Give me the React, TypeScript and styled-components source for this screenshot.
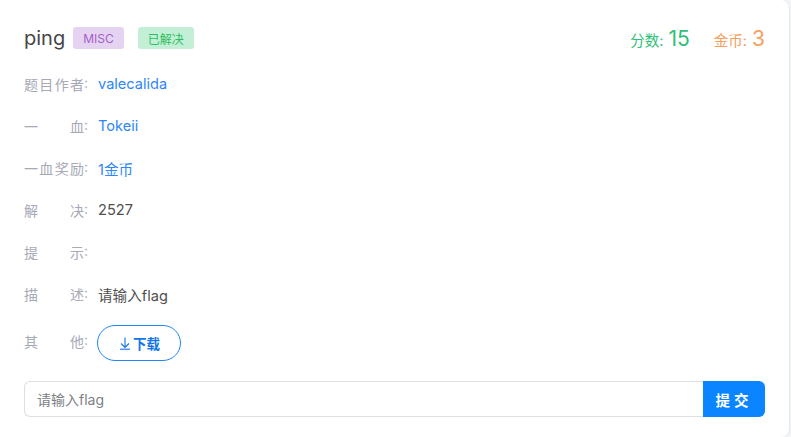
import styled, { createGlobalStyle } from "styled-components";

const GlobalStyle = createGlobalStyle`
  html, body {
    margin: 0;
    padding: 0;
    background: #f4f5f7;
    font-family: "Inter", "Noto Sans CJK SC", sans-serif;
  }
`;

const Card = styled.div`
  width: 789px;
  box-sizing: border-box;
  background: #fff;
  border-radius: 0 8px 8px 0;
  box-shadow: 1px 0 2px rgba(0, 0, 0, 0.06);
  padding: 20px 24px 20px 24px;
`;

const Header = styled.div`
  display: flex;
  align-items: center;
  height: 36px;
  margin-bottom: 7px;
`;

const Title = styled.h2`
  margin: 0;
  font-size: 20px;
  font-weight: 400;
  color: #454545;
`;

const Tag = styled.span<{ $bg: string; $fg: string; $ml: number }>`
  display: inline-flex;
  align-items: center;
  height: 22px;
  padding: 0 10px;
  margin-left: ${(p) => p.$ml}px;
  border-radius: 3px;
  font-size: 12px;
  background: ${(p) => p.$bg};
  color: ${(p) => p.$fg};
`;

const Scores = styled.div`
  margin-left: auto;
  display: flex;
  align-items: baseline;
  gap: 24px;
`;

const Score = styled.span<{ $color: string }>`
  color: ${(p) => p.$color};
  font-size: 14.5px;

  b {
    font-weight: 400;
    font-size: 21px;
    margin-left: 5px;
  }
`;

const Row = styled.div<{ $h?: number }>`
  display: flex;
  align-items: center;
  height: ${(p) => p.$h ?? 42}px;
  font-size: 14px;
`;

const Label = styled.span`
  width: 64px;
  margin-right: 10px;
  display: flex;
  color: #a6a9b6;

  span {
    flex: 1;
    text-align: justify;
    text-align-last: justify;
  }
`;

const Value = styled.span<{ $link?: boolean }>`
  color: ${(p) => (p.$link ? "#2f86f6" : "#505050")};
  font-size: 14.6px;
`;

const DownloadButton = styled.button`
  height: 36px;
  width: 84px;
  margin-top: 4px;
  margin-left: -1px;
  border: 1px solid #1f86f5;
  border-radius: 18px;
  background: #fff;
  color: #1475e8;
  font-family: inherit;
  font-size: 13.5px;
  font-weight: 700;
  display: inline-flex;
  align-items: center;
  justify-content: center;
  gap: 1px;
  cursor: pointer;
`;

const SubmitBar = styled.div`
  display: flex;
  margin-top: 14px;
  height: 36px;
`;

const FlagInput = styled.input`
  flex: 1;
  box-sizing: border-box;
  border: 1px solid #dcdfe6;
  border-right: none;
  border-radius: 6px 0 0 6px;
  padding: 0 12px;
  font-family: inherit;
  font-size: 14px;
  color: #555;
  outline: none;

  &::placeholder {
    color: #7c7f86;
  }
`;

const SubmitButton = styled.button`
  width: 62px;
  border: none;
  border-radius: 0 6px 6px 0;
  background: #0a84ff;
  color: #fff;
  font-family: inherit;
  font-size: 14.5px;
  font-weight: 700;
  letter-spacing: 4px;
  padding-left: 6px;
  cursor: pointer;
`;

const rows: { label: string; value?: string; link?: boolean }[] = [
  { label: "题目作者", value: "valecalida", link: true },
  { label: "一血", value: "Tokeii", link: true },
  { label: "一血奖励", value: "1金币", link: true },
  { label: "解决", value: "2527" },
  { label: "提示" },
  { label: "描述", value: "请输入flag" },
];

const App = () => (
  <>
    <GlobalStyle />
    <Card>
      <Header>
        <Title>ping</Title>
        <Tag $bg="#e6d3f1" $fg="#a25fcb" $ml={8}>MISC</Tag>
        <Tag $bg="#c3efd6" $fg="#2fbd62" $ml={14}>已解决</Tag>
        <Scores>
          <Score $color="#2fc07a">
            分数:<b>15</b>
          </Score>
          <Score $color="#f7a05e">
            金币:<b>3</b>
          </Score>
        </Scores>
      </Header>

      {rows.map((r) => (
        <Row key={r.label}>
          <Label>
            <span>{r.label}</span>:
          </Label>
          {r.value && <Value $link={r.link}>{r.value}</Value>}
        </Row>
      ))}

      <Row $h={52}>
        <Label>
          <span>其他</span>:
        </Label>
        <DownloadButton>
          <svg width="14" height="14" viewBox="0 0 14 14" fill="none" stroke="currentColor" strokeWidth="1.1">
            <path d="M7 1.5v10M3 7.5 7 11.5l4-4" />
            <path d="M2 13.2h10" />
          </svg>
          下载
        </DownloadButton>
      </Row>

      <SubmitBar>
        <FlagInput placeholder="请输入flag" />
        <SubmitButton>提交</SubmitButton>
      </SubmitBar>
    </Card>
  </>
);

export default App;
